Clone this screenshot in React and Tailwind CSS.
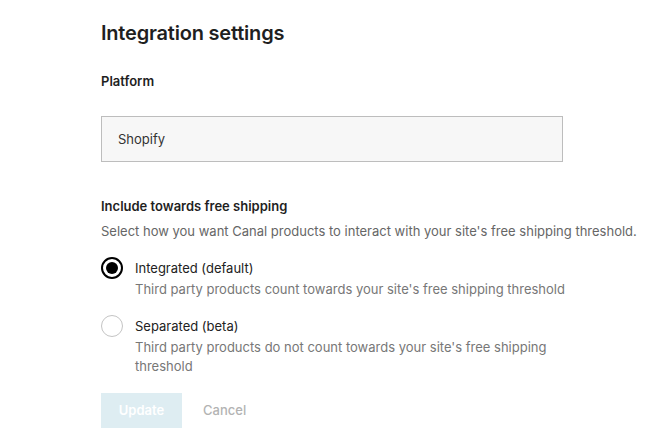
import React from 'react';

const options = [
  {
    id: 'integrated',
    label: 'Integrated (default)',
    hint: "Third party products count towards your site's free shipping threshold",
  },
  {
    id: 'separated',
    label: 'Separated (beta)',
    hint: "Third party products do not count towards your site's free shipping threshold",
  },
];

const Radio = ({ checked }) => (
  <span
    className={
      checked
        ? 'mt-[-1px] flex h-[22px] w-[22px] shrink-0 items-center justify-center rounded-full border-2 border-black bg-white'
        : 'mt-[-1px] flex h-[22px] w-[22px] shrink-0 rounded-full border border-[#c4c4c4] bg-white'
    }
  >
    {checked && <span className="h-[12px] w-[12px] rounded-full bg-black" />}
  </span>
);

const App = () => {
  const selected = 'integrated';

  return (
    <div className="min-h-[432px] bg-white pl-[101px] pt-[19px] font-['Inter','Liberation_Sans',sans-serif] text-[#1f1f1f]">
      <h1 className="text-[20px] font-semibold leading-[28px] tracking-[-0.2px]">Integration settings</h1>

      <div className="mt-[24px] text-[13px] font-semibold leading-[20px]">Platform</div>
      <div className="mt-[25px] flex h-[46px] w-[462px] items-center border border-[#bdbdbd] bg-[#f7f7f7] px-[16px] pt-[2px] text-[13px] text-[#333]">
        Shopify
      </div>

      <div className="mt-[34px] text-[13px] font-semibold leading-[20px]">Include towards free shipping</div>
      <p className="mt-[5px] text-[13px] leading-[20px] text-[#666]">
        Select how you want Canal products to interact with your site's free shipping threshold.
      </p>

      <div className="mt-[17px] flex w-[464px] flex-col gap-[17px]">
        {options.map((o) => (
          <label key={o.id} className="flex items-start gap-[12px]">
            <Radio checked={o.id === selected} />
            <div className="flex flex-col">
              <span className="text-[13px] leading-[20px] text-[#222]">{o.label}</span>
              <span className="mt-[2px] text-[13px] leading-[19px] text-[#777]">{o.hint}</span>
            </div>
          </label>
        ))}
      </div>

      <div className="mt-[17px] flex items-center gap-[21px]">
        <button className="h-[35px] w-[81px] bg-[#deedf2] text-[13px] font-semibold text-white">Update</button>
        <button className="text-[13px] font-medium text-[#b3b3b3]">Cancel</button>
      </div>
    </div>
  );
};

export default App;
